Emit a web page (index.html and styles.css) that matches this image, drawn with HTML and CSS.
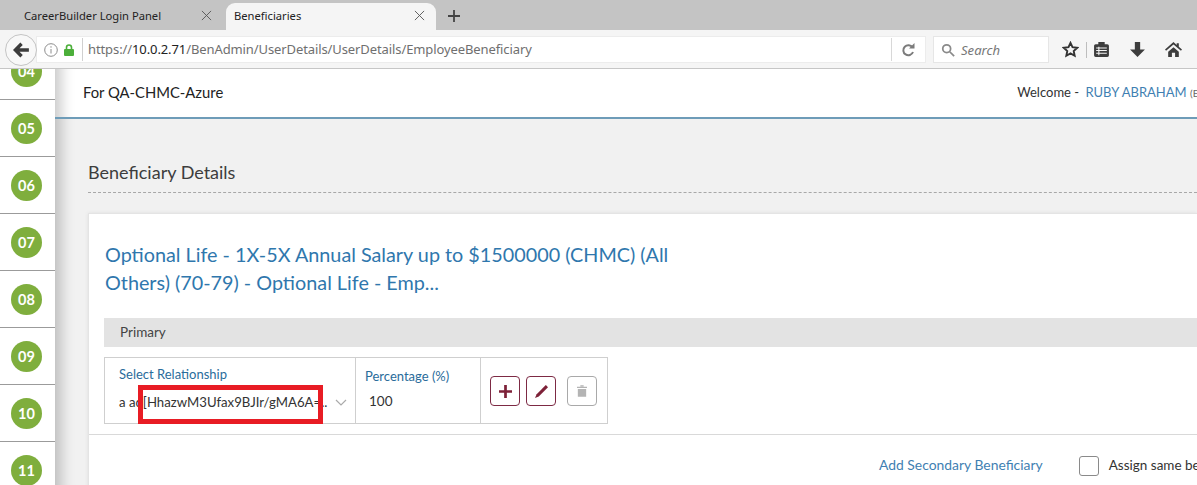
FILE: index.html
```html
<!DOCTYPE html>
<html lang="en">
<head>
<meta charset="utf-8">
<title>Beneficiaries</title>
<link rel="stylesheet" href="styles.css">
</head>
<body>
<div class="tabbar">
  <div class="tab"><span class="tab-title">CareerBuilder Login Panel</span><svg class="tab-x" viewBox="0 0 12 12"><path d="M1 1l10 10M11 1L1 11"/></svg></div>
  <div class="tab active"><span class="tab-title">Beneficiaries</span><svg class="tab-x" viewBox="0 0 12 12"><path d="M1 1l10 10M11 1L1 11"/></svg></div>
  <svg class="tab-plus" viewBox="0 0 12 12"><path d="M6 0v12M0 6h12"/></svg>
</div>
<div class="toolbar">
  <div class="back"><svg viewBox="0 0 16 16"><path d="M8.500 2.500L3 8l5.500 5.500M3.500 8H15"/></svg></div>
  <div class="urlbar">
    <svg class="info" viewBox="0 0 14 14"><circle cx="7" cy="7" r="6.300"/><path d="M7 6v4.500M7 3.200v1.500"/></svg>
    <svg class="lock" viewBox="0 0 10 12"><path class="lock-bow" d="M2.500 6V3.500a2.500 2.500 0 0 1 5 0V6"/><rect x="0" y="5" width="10" height="7" rx="1"/></svg>
    <span class="url"><span class="url-dim">https://</span>10.0.2.71<span class="url-dim">/BenAdmin/UserDetails/UserDetails/EmployeeBeneficiary</span></span>
    <svg class="reload" viewBox="0 0 14 14"><path d="M11.500 4.500A5 5 0 1 0 12 9"/><path class="fill" d="M8 5.500h5.500V0z"/></svg>
  </div>
  <div class="searchbox">
    <svg viewBox="0 0 16 16"><circle cx="6.500" cy="6.500" r="4.500"/><path d="M10 10l5 5"/></svg>
    <span>Search</span>
  </div>
  <div class="tools">
    <svg class="star" viewBox="0 0 18 18"><path d="M9 2l2.100 4.600 5 .6-3.700 3.400 1 5L9 13.100l-4.400 2.500 1-5L1.900 7.200l5-.6z"/></svg>
    <span class="tool-sep"></span>
    <svg class="clip" viewBox="0 0 16 16"><path d="M1 4.500A1.500 1.500 0 0 1 2.500 3H5V1h6v2h2.500A1.500 1.500 0 0 1 15 4.500v9a1.500 1.500 0 0 1-1.500 1.500h-11A1.500 1.500 0 0 1 1 13.500z"/><path class="clip-lines" d="M3 6.500h10M3 9h10M3 11.500h10M5.500 5.500v8"/></svg>
    <svg class="down" viewBox="0 0 16 16"><path d="M5.500 1h5v7H15l-7 7-7-7h4.500z"/></svg>
    <svg class="home" viewBox="0 0 16 16"><path d="M8 1L0 8l1 1.200L8 3.400l7 5.800L16 8l-3-2.600V2h-2v1.700zM3 10l5-4.200 5 4.200v5H9.500v-4h-3v4H3z"/></svg>
  </div>
</div>
<div class="page">
  <aside class="steps">
    <div class="step"><span class="dot">04</span></div>
    <div class="step"><span class="dot">05</span></div>
    <div class="step"><span class="dot">06</span></div>
    <div class="step"><span class="dot">07</span></div>
    <div class="step"><span class="dot">08</span></div>
    <div class="step"><span class="dot">09</span></div>
    <div class="step"><span class="dot">10</span></div>
    <div class="step"><span class="dot">11</span></div>
  </aside>
  <main class="main">
    <header class="head">
      <span class="org">For QA-CHMC-Azure</span>
      <span class="welcome">Welcome - <a class="user">RUBY ABRAHAM</a> <small>(Employee)</small></span>
    </header>
    <section class="content">
      <h1 class="title">Beneficiary Details</h1>
      <div class="card">
        <h2 class="plan">Optional Life - 1X-5X Annual Salary up to $1500000 (CHMC) (All Others) (70-79) - Optional Life - Emp...</h2>
        <div class="primary">Primary</div>
        <div class="grid">
          <div class="cell cell-rel">
            <div class="label">Select Relationship</div>
            <div class="select"><span class="select-text">a ad[HhazwM3Ufax9BJIr/gMA6A=..</span><svg viewBox="0 0 12 7"><path d="M1 1l5 5 5-5"/></svg></div>
            <div class="redbox"></div>
          </div>
          <div class="cell cell-pct">
            <div class="label">Percentage (%)</div>
            <div class="pct">100</div>
          </div>
          <div class="cell cell-btn">
            <button class="btn"><svg viewBox="0 0 12 12"><path d="M6 0v12M0 6h12"/></svg></button>
            <button class="btn"><svg class="pen" viewBox="0 0 12 12"><path d="M10 0l2 2-8.500 8.500L0 12l1.500-3.500z"/></svg></button>
            <button class="btn off"><svg viewBox="0 0 12 14"><path d="M4 1.500h4V0H4zM0 2h12v1.500H0zM1 4.500h10V14H1z"/></svg></button>
          </div>
        </div>
        <div class="foot">
          <a class="add">Add Secondary Beneficiary</a>
          <span class="foot-sep"></span>
          <span class="check"></span>
          <span class="assign">Assign same beneficiaries to all plans</span>
        </div>
      </div>
    </section>
  </main>
</div>
</body>
</html>
```
FILE: styles.css
```css
* { box-sizing: border-box; }
html, body { margin: 0; height: 485px; width: 1197px; overflow: hidden; background: #fff; }
body { font-family: Lato, "Open Sans", sans-serif; color: #333; display: flex; flex-direction: column; }

.tabbar { height: 30px; flex: none; background: #c4c4c4; display: flex; padding-top: 3px; }
.tab { width: 222px; display: flex; align-items: center; font: 11.2px "Noto Sans", sans-serif; color: #222; padding: 0 10px 2px 24px; }
.tab.active { width: 210px; margin-left: 4px; padding-left: 8px; padding-right: 11px; background: #f5f5f5; border-radius: 9px 9px 0 0; }
.tab-title { flex: 1; white-space: nowrap; }
.tab-x { width: 11px; height: 11px; fill: none; stroke: #555; stroke-width: 1; }
.tab-plus { width: 12px; height: 12px; margin: 7px 0 0 12px; fill: none; stroke: #444; stroke-width: 1.800; }

.toolbar { height: 39px; flex: none; background: #f5f5f5; border-bottom: 1px solid #c6c6c6; display: flex; align-items: center; padding: 1px 0 0 5px; }
.back { width: 32px; height: 32px; flex: none; border: 1px solid #c4c4c4; border-radius: 50%; background: #f8f8f8; display: flex; align-items: center; justify-content: center; position: relative; z-index: 1; }
.back svg { width: 18px; height: 18px; fill: none; stroke: #3c3c3c; stroke-width: 3; }
.urlbar { width: 890px; height: 27px; margin-left: -1px; flex: none; background: #fff; border: 1px solid #ececec; display: flex; align-items: center; padding-left: 7px; }
.info { width: 14px; height: 14px; flex: none; fill: none; stroke: #8c8c8c; stroke-width: 1; }
.lock { width: 10px; height: 12px; flex: none; margin-left: 6px; fill: #4caf3a; }
.lock-bow { fill: none; stroke: #4caf3a; stroke-width: 1.600; }
.url { font: 13px "Noto Sans", sans-serif; letter-spacing: -0.1px; color: #222; margin-left: 8px; padding-left: 5px; border-left: 1px solid #d0d0d0; border-right: 1px solid #d8d8d8; line-height: 23px; flex: 1; white-space: nowrap; }
.url-dim { color: #6f6f6f; }
.reload { width: 14px; height: 14px; flex: none; margin: 0 10px 0 9px; fill: none; stroke: #7b7b7b; stroke-width: 2; }
.reload .fill { fill: #7b7b7b; stroke: none; }
.searchbox { width: 116px; height: 27px; margin-left: 7px; flex: none; background: #fff; border: 1px solid #e6e6e6; display: flex; align-items: center; padding-left: 7px; font: italic 13.1px "Noto Sans", sans-serif; color: #777; gap: 6px; }
.searchbox svg { width: 14px; height: 14px; fill: none; stroke: #8a8a8a; stroke-width: 2; }
.tools { display: flex; align-items: center; margin-left: 13px; }
.tools svg { width: 17px; height: 17px; flex: none; }
.star { fill: none; stroke: #333; stroke-width: 2; }
.tool-sep { width: 1px; height: 16px; background: #bdbdbd; margin: 0 6px 0 7px; }
.clip { fill: #3d3d3d; }
.clip-lines { fill: none; stroke: #f5f5f5; stroke-width: 1; }
.down { fill: #3d3d3d; margin-left: 19px; }
.home { fill: #3d3d3d; margin-left: 19px; }

.page { flex: 1; min-height: 0; display: flex; overflow: hidden; }
.steps { width: 55px; flex: none; margin-top: -26px; background: #fff; }
.step { height: 57px; border-bottom: 1px solid #9b9b9b; display: flex; align-items: center; padding-left: 11px; }
.dot { width: 31px; height: 31px; border-radius: 50%; background: #7fae3d; color: #fff; font-weight: 700; font-size: 14.5px; display: flex; align-items: center; justify-content: center; }

.main { width: 1142px; flex: none; display: flex; flex-direction: column; background: #f1f1f1; box-shadow: inset 20px 0 14px -14px rgba(0,0,0,.22); }
.head { height: 50px; flex: none; background: #fff; border-bottom: 2px solid #6e9cb8; display: flex; align-items: center; padding: 0 0 2px 28px; box-shadow: inset 20px 0 14px -14px rgba(0,0,0,.22); }
.org { font-size: 14.8px; color: #222; }
.welcome { margin-left: auto; margin-right: -41px; font-size: 13px; color: #333; white-space: nowrap; }
.user { color: #3f7fb2; font-size: 13px; margin-left: 3px; }
.welcome small { font-size: 10px; color: #666; }

.content { flex: 1; padding: 0 0 0 33px; overflow: hidden; }
.title { margin: 0; height: 74px; padding-top: 42px; font-weight: 400; font-size: 18px; line-height: 22px; color: #3d3d3d; border-bottom: 1px dashed #a8a8a8; }
.card { margin-top: 20px; background: #fff; border: 1px solid #e4e4e4; border-right: 0; box-shadow: 0 0 4px rgba(0,0,0,.08); padding: 26px 0 0 0; height: 300px; }
.plan { margin: 0 0 0 16px; width: 570px; font-weight: 400; font-size: 19.8px; line-height: 28px; color: #2f77ad; }
.primary { margin: 22px 0 0 15px; height: 29px; background: #e3e3e3; font-size: 13.5px; line-height: 28px; padding-left: 16px; color: #444; }
.grid { margin: 10px 0 0 15px; width: 504px; height: 67px; border: 1px solid #cfcfcf; display: flex; }
.cell { position: relative; border-right: 1px solid #cfcfcf; }
.cell-rel { width: 251px; padding: 8px 0 0 14px; }
.cell-pct { width: 125px; padding: 10px 0 0 9px; }
.cell-btn { flex: 1; border-right: 0; display: flex; align-items: flex-start; padding: 18px 0 0 9px; }
.label { font-size: 13px; line-height: 17px; color: #2a6c9b; }
.select { display: flex; align-items: center; margin-top: 11px; font-size: 13.2px; line-height: 17px; color: #333; white-space: nowrap; }
.select-text { width: 213px; }
.select svg { width: 12px; height: 7px; margin-left: 3px; fill: none; stroke: #aaa; stroke-width: 1.200; }
.redbox { position: absolute; left: 33px; top: 27px; width: 185px; height: 39px; border: 5px solid #e81c24; }
.pct { font-size: 13.5px; line-height: 17px; margin: 8px 0 0 4px; color: #333; }
.btn { width: 30px; height: 30px; padding: 0; background: #fff; border: 1px solid #7d2a44; border-radius: 4px; display: flex; align-items: center; justify-content: center; margin-right: 6px; }
.btn svg { width: 13px; height: 13px; fill: none; stroke: #7d2138; stroke-width: 2.500; }
.btn .pen { fill: #7d2138; stroke: none; }
.btn.off { border-color: #a9a9a9; margin-left: 5px; }
.btn.off svg { width: 10px; height: 12px; fill: #b4b4b4; stroke: none; }
.foot { margin-top: 10px; border-top: 1px solid #d9d9d9; display: flex; align-items: flex-start; padding: 13px 0 0 790px; height: 60px; white-space: nowrap; }
.add { font-size: 13.9px; color: #3f7fb2; line-height: 34px; }
.foot-sep { width: 1px; height: 38px; background: #d2d2d2; margin-left: 15px; }
.check { width: 20px; height: 20px; border: 1px solid #8a8a8a; border-radius: 3px; margin: 8px 0 0 21px; flex: none; }
.assign { font-size: 13.5px; color: #333; margin-left: 10px; line-height: 34px; }
```
